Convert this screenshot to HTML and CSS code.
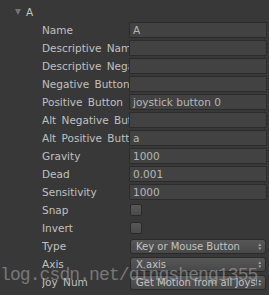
FILE: index.html
```html
<!DOCTYPE html>
<html lang="en">
<head>
    <meta charset="UTF-8">
    <title>Input Axis - A</title>
    <link rel="stylesheet" href="styles.css">
</head>
<body>
    <div class="inspector">
        <div class="foldout">
            <span class="fold-arrow"></span>
            <span class="fold-title">A</span>
        </div>
        <div class="props">
            <div class="prop"><span class="label">Name</span><div class="field">A</div></div>
            <div class="prop"><span class="label">Descriptive Name</span><div class="field"></div></div>
            <div class="prop"><span class="label">Descriptive Negative Name</span><div class="field"></div></div>
            <div class="prop"><span class="label">Negative Button</span><div class="field"></div></div>
            <div class="prop"><span class="label">Positive Button</span><div class="field">joystick button 0</div></div>
            <div class="prop"><span class="label">Alt Negative Button</span><div class="field"></div></div>
            <div class="prop"><span class="label">Alt Positive Button</span><div class="field">a</div></div>
            <div class="prop"><span class="label">Gravity</span><div class="field">1000</div></div>
            <div class="prop"><span class="label">Dead</span><div class="field">0.001</div></div>
            <div class="prop"><span class="label">Sensitivity</span><div class="field">1000</div></div>
            <div class="prop"><span class="label">Snap</span><div class="toggle"></div></div>
            <div class="prop"><span class="label">Invert</span><div class="toggle"></div></div>
            <div class="prop"><span class="label">Type</span><div class="popup"><span>Key or Mouse Button</span><span class="popup-arrows">&#9652;<br>&#9662;</span></div></div>
            <div class="prop"><span class="label">Axis</span><div class="popup"><span>X axis</span><span class="popup-arrows">&#9652;<br>&#9662;</span></div></div>
            <div class="prop"><span class="label">Joy Num</span><div class="popup"><span>Get Motion from all Joysticks</span><span class="popup-arrows">&#9652;<br>&#9662;</span></div></div>
        </div>
    </div>
    <div class="watermark">log.csdn.net/qingsheng1355</div>
</body>
</html>
```

FILE: styles.css
```css
* {
    margin: 0;
    padding: 0;
    box-sizing: border-box;
}

body {
    background-color: #383838;
    color: #c0c0c0;
    font-family: 'DejaVu Sans', sans-serif;
    font-size: 10.5px;
    width: 269px;
    height: 295px;
    overflow: hidden;
    position: relative;
}

.inspector {
    padding-top: 4px;
}

.foldout {
    display: flex;
    align-items: center;
    height: 16px;
    padding-left: 15px;
    margin-bottom: 2px;
}

.fold-arrow {
    width: 0;
    height: 0;
    border-left: 3.5px solid transparent;
    border-right: 3.5px solid transparent;
    border-top: 6px solid #747474;
    margin-right: 5px;
}

.fold-title {
    color: #c4c4c4;
}

.props {
    display: flex;
    flex-direction: column;
    gap: 2px;
}

.prop {
    display: flex;
    align-items: center;
    height: 16px;
    padding-left: 42px;
}

.label {
    width: 87px;
    flex-shrink: 0;
    white-space: nowrap;
    overflow: hidden;
    word-spacing: 2px;
}

.field {
    width: 138px;
    height: 16px;
    line-height: 14px;
    padding-left: 3px;
    background: #424242;
    border: 1px solid #2b2b2b;
    border-radius: 1px;
    color: #b6b6b6;
    white-space: nowrap;
    overflow: hidden;
}

.toggle {
    width: 12px;
    height: 12px;
    margin-left: 1px;
    background: linear-gradient(#595959, #4a4a4a);
    border: 1px solid #2a2a2a;
    border-radius: 2px;
}

.popup {
    display: flex;
    align-items: center;
    justify-content: space-between;
    width: 136px;
    height: 15px;
    margin-left: 1px;
    padding: 0 4px 0 5px;
    background: linear-gradient(#575757, #484848);
    border: 1px solid #2a2a2a;
    border-radius: 3px;
    color: #c2c2c2;
    font-size: 10px;
    white-space: nowrap;
    overflow: hidden;
}

.popup span:first-child {
    overflow: hidden;
}

.popup-arrows {
    font-size: 5px;
    line-height: 4px;
    color: #b0b0b0;
    text-align: center;
    flex-shrink: 0;
    margin-left: 1px;
}

.watermark {
    position: absolute;
    left: 0;
    top: 266px;
    font-family: 'Liberation Mono', monospace;
    font-size: 18px;
    line-height: 1;
    letter-spacing: -0.9px;
    color: rgba(185, 185, 185, 0.5);
    white-space: nowrap;
}
```
